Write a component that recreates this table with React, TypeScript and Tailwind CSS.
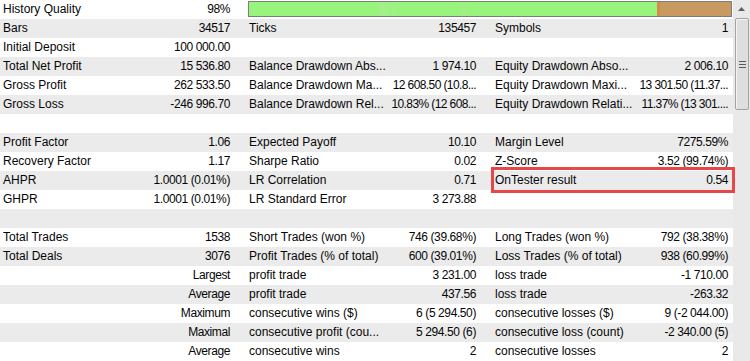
import React from "react";

type Cell = { l?: string; v?: string };
type Row = { cells?: [Cell, Cell, Cell]; box?: boolean };

const GROUPS = [
  { w: "w-[246px]", lw: "w-[130px]", pr: "pr-[16px]" },
  { w: "w-[246px]", lw: "w-[141px]", pr: "pr-[16px]" },
  { w: "w-[241px]", lw: "w-[141px]", pr: "pr-[5px]" },
];

const ROWS: Row[] = [
  { cells: [{ l: "Bars", v: "34517" }, { l: "Ticks", v: "135457" }, { l: "Symbols", v: "1" }] },
  { cells: [{ l: "Initial Deposit", v: "100 000.00" }, {}, {}] },
  {
    cells: [
      { l: "Total Net Profit", v: "15 536.80" },
      { l: "Balance Drawdown Abs...", v: "1 974.10" },
      { l: "Equity Drawdown Abso...", v: "2 006.10" },
    ],
  },
  {
    cells: [
      { l: "Gross Profit", v: "262 533.50" },
      { l: "Balance Drawdown Ma...", v: "12 608.50 (10.8..." },
      { l: "Equity Drawdown Maxi...", v: "13 301.50 (11.37..." },
    ],
  },
  {
    cells: [
      { l: "Gross Loss", v: "-246 996.70" },
      { l: "Balance Drawdown Rel...", v: "10.83% (12 608..." },
      { l: "Equity Drawdown Relati...", v: "11.37% (13 301...." },
    ],
  },
  {},
  {
    cells: [
      { l: "Profit Factor", v: "1.06" },
      { l: "Expected Payoff", v: "10.10" },
      { l: "Margin Level", v: "7275.59%" },
    ],
  },
  {
    cells: [
      { l: "Recovery Factor", v: "1.17" },
      { l: "Sharpe Ratio", v: "0.02" },
      { l: "Z-Score", v: "3.52 (99.74%)" },
    ],
  },
  {
    cells: [
      { l: "AHPR", v: "1.0001 (0.01%)" },
      { l: "LR Correlation", v: "0.71" },
      { l: "OnTester result", v: "0.54" },
    ],
    box: true,
  },
  {
    cells: [
      { l: "GHPR", v: "1.0001 (0.01%)" },
      { l: "LR Standard Error", v: "3 273.88" },
      {},
    ],
  },
  {},
  {
    cells: [
      { l: "Total Trades", v: "1538" },
      { l: "Short Trades (won %)", v: "746 (39.68%)" },
      { l: "Long Trades (won %)", v: "792 (38.38%)" },
    ],
  },
  {
    cells: [
      { l: "Total Deals", v: "3076" },
      { l: "Profit Trades (% of total)", v: "600 (39.01%)" },
      { l: "Loss Trades (% of total)", v: "938 (60.99%)" },
    ],
  },
  {
    cells: [
      { v: "Largest" },
      { l: "profit trade", v: "3 231.00" },
      { l: "loss trade", v: "-1 710.00" },
    ],
  },
  {
    cells: [
      { v: "Average" },
      { l: "profit trade", v: "437.56" },
      { l: "loss trade", v: "-263.32" },
    ],
  },
  {
    cells: [
      { v: "Maximum" },
      { l: "consecutive wins ($)", v: "6 (5 294.50)" },
      { l: "consecutive losses ($)", v: "9 (-2 044.00)" },
    ],
  },
  {
    cells: [
      { v: "Maximal" },
      { l: "consecutive profit (cou...", v: "5 294.50 (6)" },
      { l: "consecutive loss (count)", v: "-2 340.00 (5)" },
    ],
  },
  {
    cells: [
      { v: "Average" },
      { l: "consecutive wins", v: "2" },
      { l: "consecutive losses", v: "2" },
    ],
  },
];

function Group({ g, c, box }: { g: (typeof GROUPS)[number]; c: Cell; box?: boolean }) {
  const cut = (c.v ?? "").endsWith("...") && (c.v ?? "").includes("(");
  return (
    <div className={`relative flex h-full shrink-0 ${g.w}`}>
      <div className={`${g.lw} shrink-0 pl-[3px] whitespace-nowrap overflow-hidden`}>{c.l ?? ""}</div>
      <div
        className={`flex flex-1 justify-end whitespace-nowrap ${cut ? "tracking-[-0.6px]" : "tracking-[-0.4px]"} ${g.pr}`}
      >
        {c.v ?? ""}
      </div>
      {box && (
        <div className="pointer-events-none absolute left-[-1px] top-[-4px] z-10 h-[26px] w-[244px] border-[3px] border-[#e8474a]" />
      )}
    </div>
  );
}

function QualityBar() {
  return (
    <div className="ml-[2px] mt-[1px] flex h-[16px] w-[484px] border border-[#7d7d7d]">
      <div className="h-full w-[131px] bg-[#98f47c]" />
      <div className="h-full w-[6px] bg-[#a3ef8d]" />
      <div className="h-full w-[12px] bg-[#9df283]" />
      <div className="h-full w-[64px] bg-[#98f47c]" />
      <div className="h-full w-[4px] bg-[#a0ef8a]" />
      <div className="h-full w-[191px] bg-[#98f47c]" />
      <div className="h-full w-[3px] bg-[#d58a4f]" />
      <div className="h-full flex-1 bg-[#c99a5f]" />
    </div>
  );
}

function Scrollbar() {
  return (
    <div className="relative h-[361px] w-[17px] shrink-0 bg-[#e9e9e9]">
      <div className="flex h-[17px] items-center justify-center">
        <svg width="7" height="4" viewBox="0 0 7 4">
          <polygon points="0,4 7,4 3.5,0" fill="#606060" />
        </svg>
      </div>
      <div className="ml-[2px] mt-[1px] flex h-[92px] w-[14px] flex-col items-center justify-center gap-[2px] rounded-[2px] border border-[#a3a3a3] bg-[#dedede] shadow-[inset_1px_1px_0_#f4f4f4]">
        <div className="h-px w-[7px] bg-[#5a5a5a]" />
        <div className="h-px w-[7px] bg-[#5a5a5a]" />
        <div className="h-px w-[7px] bg-[#5a5a5a]" />
      </div>
    </div>
  );
}

export default function App() {
  return (
    <div className="flex h-[361px] w-[750px] overflow-hidden bg-white font-['Liberation_Sans',Arial,sans-serif] text-[12px] leading-[19px] text-[#050505]">
      <div className="flex w-[733px] shrink-0 flex-col">
        <div className="flex h-[19px] bg-white">
          <Group g={GROUPS[0]} c={{ l: "History Quality", v: "98%" }} />
          <QualityBar />
        </div>
        {ROWS.map((r, i) => (
          <div key={i} className={`flex h-[19px] ${i % 2 === 0 ? "bg-[#ebebeb]" : "bg-white"}`}>
            {r.cells &&
              r.cells.map((c, j) => <Group key={j} g={GROUPS[j]} c={c} box={r.box && j === 2} />)}
          </div>
        ))}
      </div>
      <Scrollbar />
    </div>
  );
}
